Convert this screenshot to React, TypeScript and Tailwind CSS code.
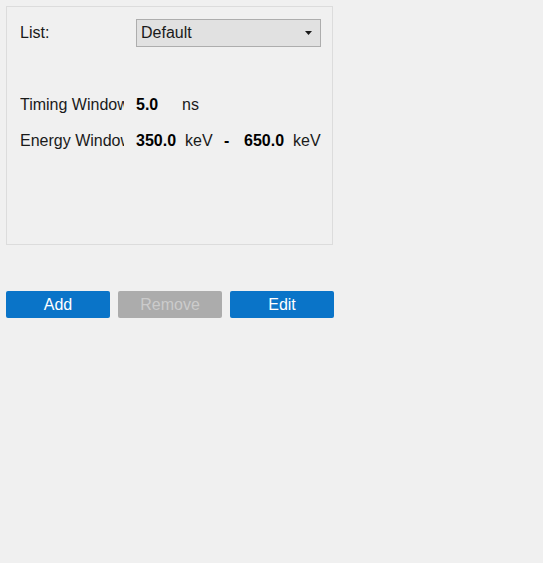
import React from "react";

export default function App() {
  const font = { fontFamily: '"Liberation Sans", Arial, sans-serif' };
  return (
    <div className="w-[543px] h-[563px] bg-[#f0f0f0] text-[16px] text-[#1a1a1a] relative" style={font}>
      <div className="pt-[6px] pl-[6px]">
        <div className="w-[327px] h-[239px] border border-[#dcdcdc] bg-[#f0f0f0] pl-[13px] pt-[12px]">
          <div className="flex items-center h-[28px]">
            <div className="w-[116px] leading-none">List:</div>
            <div className="w-[185px] h-[28px] border border-[#adadad] bg-[#e1e1e1] flex items-center justify-between pl-[4px] pr-[8px]">
              <span className="leading-none">Default</span>
              <svg width="7" height="4" viewBox="0 0 7 4"><path d="M0 0 L7 0 L3.5 4 Z" fill="#1a1a1a" /></svg>
            </div>
          </div>
          <div className="flex items-center h-[20px] mt-[48px] leading-none">
            <div className="w-[104px] overflow-hidden whitespace-nowrap">Timing Window</div>
            <div className="w-[12px]" />
            <div className="w-[46px] font-bold text-black">5.0</div>
            <div>ns</div>
          </div>
          <div className="flex items-center h-[20px] mt-[16px] leading-none">
            <div className="w-[104px] overflow-hidden whitespace-nowrap">Energy Window</div>
            <div className="w-[12px]" />
            <div className="w-[49px] font-bold text-black">350.0</div>
            <div className="w-[39px]">keV</div>
            <div className="w-[20px] font-bold text-black">-</div>
            <div className="w-[49px] font-bold text-black">650.0</div>
            <div>keV</div>
          </div>
        </div>
      </div>
      <div className="flex gap-[8px] pl-[6px] mt-[46px]">
        <button className="w-[104px] h-[27px] rounded-[2px] bg-[#0a74c8] text-white leading-none">Add</button>
        <button className="w-[104px] h-[27px] rounded-[2px] bg-[#acacac] text-[#cbcbcb] leading-none">Remove</button>
        <button className="w-[104px] h-[27px] rounded-[2px] bg-[#0a74c8] text-white leading-none">Edit</button>
      </div>
    </div>
  );
}
